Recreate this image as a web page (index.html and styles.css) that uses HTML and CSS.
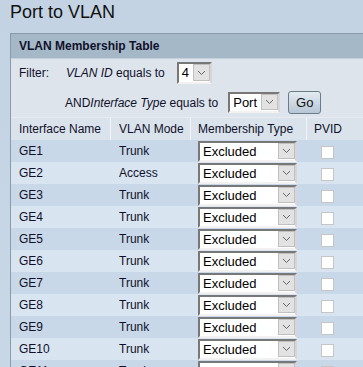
FILE: index.html
```html
<!DOCTYPE html>
<html lang="en">
<head>
    <meta charset="UTF-8">
    <title>Port to VLAN</title>
    <link rel="stylesheet" href="styles.css">
</head>
<body>

    <h1>Port to VLAN</h1>

    <div class="panel">
        <div class="panel-title">VLAN Membership Table</div>

        <div class="filter">
            <div class="filter-row">
                <span class="filter-label">Filter:</span>
                <span><i>VLAN ID</i> equals to</span>
                <div class="select sel-vlan">
                    <span class="value">4</span>
                    <span class="arrow"><svg width="9" height="6" viewBox="0 0 9 6"><path d="M1 1 L4.5 4.5 L8 1" fill="none" stroke="#666" stroke-width="1"/></svg></span>
                </div>
            </div>
            <div class="filter-row indent">
                <span>AND<i>Interface Type</i> equals to</span>
                <div class="select sel-type">
                    <span class="value">Port</span>
                    <span class="arrow"><svg width="9" height="6" viewBox="0 0 9 6"><path d="M1 1 L4.5 4.5 L8 1" fill="none" stroke="#666" stroke-width="1"/></svg></span>
                </div>
                <button class="go">Go</button>
            </div>
        </div>

        <table class="members">
            <thead>
                <tr>
                    <th class="c-name">Interface Name</th>
                    <th class="c-mode">VLAN Mode</th>
                    <th class="c-type">Membership Type</th>
                    <th class="c-pvid">PVID</th>
                </tr>
            </thead>
            <tbody id="rows"></tbody>
        </table>
    </div>

    <script>
        // filas de la tabla
        const modes = ['Trunk', 'Access', 'Trunk', 'Trunk', 'Trunk', 'Trunk', 'Trunk', 'Trunk', 'Trunk', 'Trunk', 'Trunk', 'Trunk'];
        const tbody = document.getElementById('rows');

        modes.forEach((mode, i) => {
            const tr = document.createElement('tr');
            tr.innerHTML = `
                <td class="c-name">GE${i + 1}</td>
                <td class="c-mode">${mode}</td>
                <td class="c-type">
                    <div class="select sel-member">
                        <span class="value">Excluded</span>
                        <span class="arrow"><svg width="9" height="6" viewBox="0 0 9 6"><path d="M1 1 L4.5 4.5 L8 1" fill="none" stroke="#666" stroke-width="1"/></svg></span>
                    </div>
                </td>
                <td class="c-pvid"><span class="check"></span></td>`;
            tbody.appendChild(tr);
        });
    </script>

</body>
</html>
```

FILE: styles.css
```css
body {
    margin: 0;
    overflow: hidden;
    font-family: "Liberation Sans", Arial, sans-serif;
    font-size: 12px;
    color: #10102a;
    background: linear-gradient(to bottom, #c3d3e3, #c8d8e7);
}
h1 {
    margin: 2px 0 11px 10px;
    font-size: 18px;
    font-weight: normal;
    line-height: 20px;
    color: #111;
}
.panel {
    margin-left: 10px;
    width: 420px;
    border-left: 1px solid #8a9aa9;
    border-top: 1px solid #8a9aa9;
}
.panel-title {
    height: 24px;
    line-height: 24px;
    padding-left: 8px;
    font-weight: bold;
    background-color: #a5b8c8;
    border-bottom: 1px solid #c4d0dc;
}
.filter {
    background-color: #dde4ec;
    padding: 3px 0 3px 8px;
}
.filter-row {
    display: flex;
    align-items: center;
    height: 22px;
}
.filter-row.indent {
    height: 23px;
    margin-top: 7px;
    padding-left: 46px;
}
.filter-label {
    width: 47px;
}
.select {
    display: inline-flex;
    box-sizing: border-box;
    background-color: #fff;
    border: 2px solid;
    border-color: #787878 #d6d6d6 #f2f2f2 #787878;
}
.select .value {
    flex: 1;
    padding-left: 3px;
    font-size: 13px;
    line-height: 17px;
    color: #000;
}
.select .arrow {
    width: 15px;
    margin: 0 0 1px 0;
    background-color: #e2e2e2;
    border: 1px solid #c0c0c0;
    display: flex;
    align-items: center;
    justify-content: center;
}
.sel-vlan {
    width: 35px;
    height: 22px;
    margin-left: 12px;
}
.sel-type {
    width: 52px;
    height: 21px;
    margin-left: 10px;
}
.sel-member {
    width: 99px;
    height: 21px;
    vertical-align: middle;
}
.go {
    margin-left: 8px;
    width: 33px;
    height: 23px;
    padding: 0;
    font-family: inherit;
    font-size: 13px;
    color: #111;
    border: 1px solid #6b7b8a;
    border-radius: 3px;
    background: linear-gradient(to bottom, #e4ebf1, #b6c6d4);
}
.members {
    width: 100%;
    border-spacing: 0;
    border-top: 1px solid #e6ecf2;
}
.members th,
.members td {
    height: 22px;
    padding: 0 0 0 8px;
    text-align: left;
    font-weight: normal;
    border-left: 1px solid transparent;
}
.members th {
    background-color: #dae3ec;
    border-left-color: #f2f5f8;
}
.members th.c-name,
.members td.c-name {
    border-left: 0;
    width: 91px;
}
.c-mode {
    width: 71px;
}
.c-type {
    width: 108px;
}
.members .c-type,
.members .c-pvid {
    padding-left: 7px;
}
.members tbody tr:nth-child(odd) td {
    background-color: #c8d8e8;
}
.members tbody tr:nth-child(even) td {
    background-color: #d8e4f0;
}
.check {
    display: inline-block;
    box-sizing: border-box;
    width: 13px;
    height: 13px;
    margin: 2px 0 0 7px;
    background-color: #fff;
    border: 1px solid #c6c6c6;
    vertical-align: middle;
}
```
